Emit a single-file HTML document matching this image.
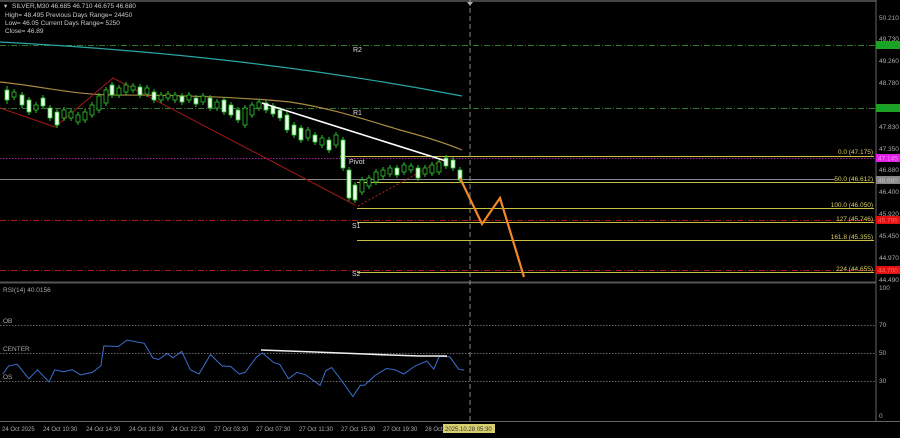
<!DOCTYPE html>
<html><head><meta charset="utf-8"><style>
html,body{margin:0;padding:0;background:#000;width:900px;height:438px;overflow:hidden}
svg{display:block;font-family:"Liberation Sans",sans-serif}
</style></head><body>
<svg width="900" height="438" xmlns="http://www.w3.org/2000/svg">
<rect width="900" height="438" fill="#000"/>
<line x1="0" y1="1" x2="876" y2="1" stroke="#444" stroke-width="2"/>
<line x1="876" y1="0" x2="876" y2="421" stroke="#666"/>
<line x1="0" y1="282.5" x2="876" y2="282.5" stroke="#555" stroke-width="2"/>
<line x1="0" y1="421.5" x2="900" y2="421.5" stroke="#666"/>
<line x1="470" y1="0" x2="470" y2="421" stroke="#aaa" stroke-dasharray="5,3" stroke-width="0.8"/>
<polygon points="467,2 473,2 470,6" fill="#aaa"/>
<g stroke-width="1">
<line x1="0" y1="45.5" x2="876" y2="45.5" stroke="#2f7a2f" stroke-dasharray="6,2,1,2"/>
<line x1="0" y1="108.5" x2="876" y2="108.5" stroke="#2f7a2f" stroke-dasharray="6,2,1,2"/>
<line x1="0" y1="158.5" x2="876" y2="158.5" stroke="#a020a0" stroke-dasharray="1.5,1.5"/>
<line x1="340" y1="156.5" x2="874" y2="156.5" stroke="#c8c040"/>
<line x1="0" y1="179.5" x2="835" y2="179.5" stroke="#888"/>
<line x1="357" y1="182.5" x2="874" y2="182.5" stroke="#c8c040"/>
<line x1="357" y1="208.5" x2="874" y2="208.5" stroke="#c8c040"/>
<line x1="0" y1="220.5" x2="876" y2="220.5" stroke="#b01818" stroke-dasharray="6,2,1,2"/>
<line x1="357" y1="222.5" x2="874" y2="222.5" stroke="#c8c040"/>
<line x1="357" y1="240.5" x2="874" y2="240.5" stroke="#c8c040"/>
<line x1="0" y1="270.5" x2="876" y2="270.5" stroke="#b01818" stroke-dasharray="6,2,1,2"/>
<line x1="357" y1="272.5" x2="874" y2="272.5" stroke="#c8c040"/>
</g>
<g font-size="6.5" fill="#d8d060" text-anchor="end">
<text x="873" y="154">0.0 (47.175)</text>
<text x="873" y="181">50.0 (46.612)</text>
<text x="873" y="207">100.0 (46.050)</text>
<text x="873" y="221">127 (45.746)</text>
<text x="873" y="239">161.8 (45.355)</text>
<text x="873" y="271">224 (44.655)</text>
</g>
<path d="M0,42 C150,50 300,65 462,96" stroke="#2aa6a6" fill="none" stroke-width="1.2"/>
<path d="M0,82 C40,86 70,94 110,95 C180,95 240,97 290,102 C330,108 360,118 400,130 C430,138 450,145 462,150" stroke="#a88a40" fill="none" stroke-width="1.2"/>
<polyline points="0,108 55,127 113,78 355,205" stroke="#a01818" fill="none" stroke-width="1"/>
<line x1="358" y1="206" x2="442" y2="160" stroke="#b02020" stroke-dasharray="2,2"/>
<!-- candles -->
<g stroke="#2ec82e" stroke-width="1">
<path d="M7,86V104M14,89V100M22,92V108M29,97V115M36,102V113M43,95V109M50,105V121M57,109V128M64,107V121M71,109V121M78,112V125M85,109V123M92,102V118M99,93V113M106,87V106M112,82V98M119,85V98M126,82V95M133,83V93M140,84V98M147,85V97M154,89V103M161,92V103M168,91V101M175,92V103M182,93V105M189,92V103M196,95V107M203,93V105M210,95V111M217,99V111M224,97V115M231,102V118M238,107V123M245,105V128M252,102V118M259,99V111M266,100V113M273,103V117M280,107V121M287,112V133M294,122V138M301,125V143M308,127V141M315,132V145M322,135V148M329,137V153M336,132V148M343,137V171M349,167V201M355,182V203M362,177V195M369,175V189M376,169V185M383,167V179M390,165V177M397,165V178M404,162V175M411,163V173M418,165V181M425,165V177M432,162V176M439,159V175M446,155V169M453,157V171M460,167V183"/>
</g>
<g stroke="#2ec82e" stroke-width="0.8">
<g fill="#e8ffe8">
<rect x="5" y="90" width="4" height="10"/><rect x="20" y="95" width="4" height="10"/><rect x="27" y="100" width="4" height="12"/>
<rect x="41" y="98" width="4" height="8"/><rect x="48" y="108" width="4" height="10"/><rect x="55" y="112" width="4" height="13"/>
<rect x="110" y="85" width="4" height="10"/><rect x="138" y="87" width="4" height="8"/><rect x="152" y="92" width="4" height="8"/>
<rect x="180" y="96" width="4" height="6"/><rect x="194" y="98" width="4" height="6"/><rect x="208" y="98" width="4" height="10"/>
<rect x="222" y="100" width="4" height="12"/><rect x="229" y="105" width="4" height="10"/><rect x="236" y="110" width="4" height="10"/>
<rect x="264" y="103" width="4" height="7"/><rect x="271" y="106" width="4" height="8"/><rect x="278" y="110" width="4" height="8"/>
<rect x="285" y="115" width="4" height="15"/><rect x="292" y="125" width="4" height="10"/><rect x="299" y="128" width="4" height="12"/>
<rect x="313" y="135" width="4" height="7"/><rect x="327" y="140" width="4" height="10"/><rect x="341" y="140" width="4" height="28"/>
<rect x="347" y="170" width="4" height="28"/><rect x="353" y="185" width="4" height="15"/><rect x="395" y="168" width="4" height="7"/>
<rect x="416" y="168" width="4" height="10"/><rect x="444" y="158" width="4" height="8"/><rect x="451" y="160" width="4" height="8"/>
<rect x="458" y="170" width="4" height="10"/>
</g>
<g fill="#000">
<rect x="12" y="92" width="4" height="5"/><rect x="34" y="105" width="4" height="5"/><rect x="62" y="110" width="4" height="8"/>
<rect x="69" y="112" width="4" height="6"/><rect x="76" y="115" width="4" height="7"/><rect x="83" y="112" width="4" height="8"/>
<rect x="90" y="105" width="4" height="10"/><rect x="97" y="96" width="4" height="14"/><rect x="104" y="90" width="4" height="13"/>
<rect x="117" y="88" width="4" height="7"/><rect x="124" y="85" width="4" height="7"/><rect x="131" y="86" width="4" height="4"/>
<rect x="145" y="88" width="4" height="6"/><rect x="159" y="95" width="4" height="5"/><rect x="166" y="94" width="4" height="4"/>
<rect x="173" y="95" width="4" height="5"/><rect x="187" y="95" width="4" height="5"/><rect x="201" y="96" width="4" height="6"/>
<rect x="215" y="102" width="4" height="6"/><rect x="243" y="108" width="4" height="17"/><rect x="250" y="105" width="4" height="10"/>
<rect x="257" y="102" width="4" height="6"/><rect x="306" y="130" width="4" height="8"/><rect x="320" y="138" width="4" height="7"/>
<rect x="334" y="135" width="4" height="10"/><rect x="360" y="180" width="4" height="12"/><rect x="367" y="178" width="4" height="8"/>
<rect x="374" y="172" width="4" height="10"/><rect x="381" y="170" width="4" height="6"/><rect x="388" y="168" width="4" height="6"/>
<rect x="402" y="165" width="4" height="7"/><rect x="409" y="166" width="4" height="4"/><rect x="423" y="168" width="4" height="6"/>
<rect x="430" y="165" width="4" height="8"/><rect x="437" y="162" width="4" height="10"/>
</g>
</g>
<line x1="262" y1="103" x2="446" y2="161" stroke="#fff" stroke-width="1.6"/>
<polyline points="460,178 482,224 500,198 524,277" stroke="#f0882a" fill="none" stroke-width="2.2"/>
<g font-size="7" fill="#ddd">
<text x="353" y="52">R2</text><text x="353" y="115">R1</text><text x="349" y="164">Pivot</text>
<text x="352" y="228">S1</text><text x="352" y="276">S2</text>
</g>
<g font-size="6.5" fill="#ccc">
<text x="4" y="8">▾</text><text x="12" y="8">SILVER,M30  46.685 46.710 46.675 46.680</text>
<text x="5" y="17">High= 48.495    Previous Days Range= 24450</text>
<text x="5" y="25">Low= 46.05    Current Days Range= 5250</text>
<text x="5" y="33">Close= 46.89</text>
</g>
<g font-size="6.5" fill="#aaa">
<text x="879" y="20">50.210</text><text x="879" y="41">49.730</text><text x="879" y="63">49.260</text>
<text x="879" y="85">48.780</text><text x="879" y="129">47.830</text><text x="879" y="151">47.350</text>
<text x="879" y="172">46.880</text><text x="879" y="194">46.400</text><text x="879" y="216">45.920</text>
<text x="879" y="238">45.450</text><text x="879" y="260">44.970</text><text x="879" y="282">44.490</text>
<text x="879" y="290">100</text><text x="879" y="327">70</text><text x="879" y="355">50</text>
<text x="879" y="383">30</text><text x="879" y="418">0</text>
</g>
<g font-size="6.5">
<rect x="876" y="41" width="24" height="8" fill="#22a022"/><text x="878" y="47.5" fill="#0a3">49.590</text>
<rect x="876" y="104" width="24" height="8" fill="#22a022"/><text x="878" y="110.5" fill="#0a3">48.240</text>
<rect x="876" y="154" width="24" height="8" fill="#e020e0"/><text x="878" y="160.5" fill="#f8f">47.145</text>
<rect x="876" y="176" width="24" height="8" fill="#888"/><text x="878" y="182.5" fill="#bbb">46.680</text>
<rect x="876" y="216" width="24" height="8" fill="#e01010"/><text x="878" y="222.5" fill="#f66">45.795</text>
<rect x="876" y="266" width="24" height="8" fill="#e01010"/><text x="878" y="272.5" fill="#f66">44.700</text>
</g>
<g stroke="#888" stroke-dasharray="1.5,1.5" stroke-width="0.8">
<line x1="0" y1="325.5" x2="876" y2="325.5"/><line x1="0" y1="353.5" x2="876" y2="353.5"/><line x1="0" y1="381.5" x2="876" y2="381.5"/>
</g>
<g font-size="6.5" fill="#aaa">
<text x="3" y="292">RSI(14) 40.0156</text><text x="3" y="323">OB</text><text x="3" y="351">CENTER</text><text x="3" y="379">OS</text>
</g>
<polyline fill="none" stroke="#3b6fd0" stroke-width="1" points="2.9,374 8.7,365.9 17.3,364.3 28.8,378.8 37.5,369.8 49,382 54.8,369.8 63.4,371.7 72.1,369.8 80.7,374.9 92.3,372.4 100.9,365.9 103.8,345.9 118.2,346.5 126.9,340.1 144.2,343.3 152.8,357.8 158.6,359.5 167.2,353.6 173,357.8 181.7,351.4 190.3,369.8 199,374 210.5,354.6 222,365.9 230.7,366.5 239.3,374 245.1,372.4 256.6,356.9 262.4,353 273.9,362.7 279.7,364.3 288.4,378.8 297,372.4 305.7,374.9 320.1,385.3 325.8,370.7 331.6,367.5 340.3,378.8 352.9,396.5 360.4,385.3 364.5,385.3 374.9,375.6 386.4,368.5 395,369.8 403.7,374 415.2,365.9 426.8,361.1 433.7,369.1 439.4,356.2 449.8,356.9 458.5,369.1 464.2,370.1"/>
<polyline points="261,350 288,351 315,352 340,353 365,354 390,355 420,356 447,356" fill="none" stroke="#eee" stroke-width="1.6"/>
<g font-size="6" fill="#aaa">
<text x="2" y="431">24 Oct 2025</text><text x="43" y="431">24 Oct 10:30</text><text x="86" y="431">24 Oct 14:30</text>
<text x="129" y="431">24 Oct 18:30</text><text x="171" y="431">24 Oct 22:30</text><text x="214" y="431">27 Oct 03:30</text>
<text x="256" y="431">27 Oct 07:30</text><text x="299" y="431">27 Oct 11:30</text><text x="341" y="431">27 Oct 15:30</text>
<text x="383" y="431">27 Oct 19:30</text><text x="425" y="431">28 Oct</text>
</g>
<rect x="443" y="424" width="52" height="9" fill="#d8d070"/>
<text x="445" y="431" font-size="6" fill="#333">2025.10.28 05:30</text>
</svg>
</body></html>
